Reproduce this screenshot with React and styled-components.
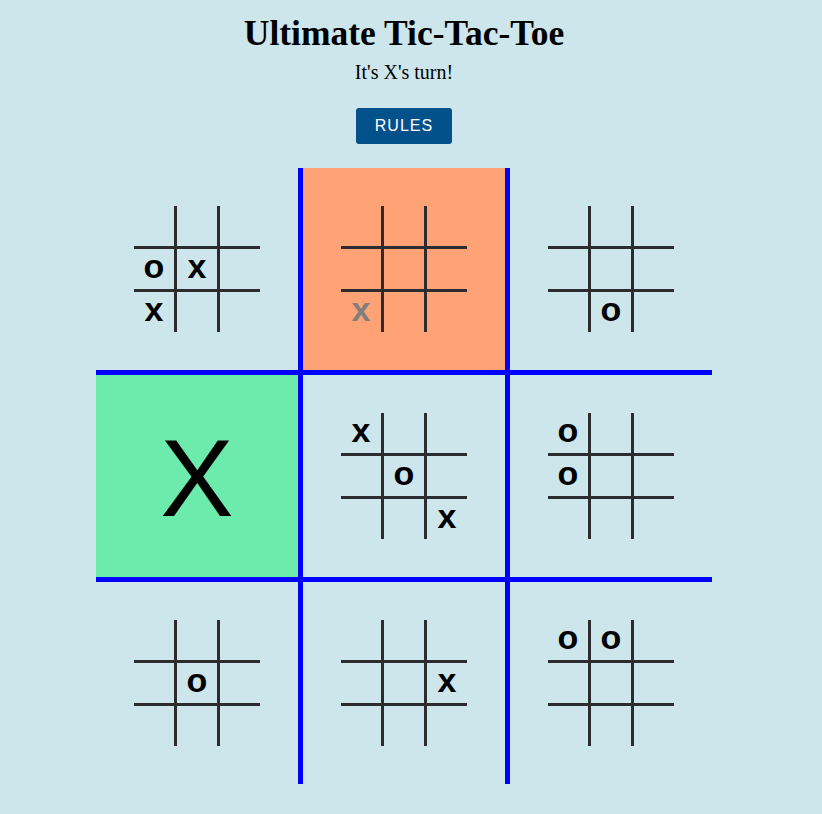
import React from "react";
import styled, { createGlobalStyle } from "styled-components";

const GlobalStyle = createGlobalStyle`
  body {
    margin: 0;
    background: #cde6eb;
    font-family: "Liberation Serif", "Times New Roman", serif;
  }
`;

const Page = styled.div`
  width: 808px;
  display: flex;
  flex-direction: column;
  align-items: center;
  padding-top: 13px;
`;

const Title = styled.h1`
  margin: 0;
  font-size: 35.5px;
  line-height: 40px;
  font-weight: bold;
  color: #000;
`;

const Status = styled.p`
  margin: 7px 0 0;
  font-size: 20px;
  line-height: 24px;
  color: #000;
`;

const RulesButton = styled.button`
  margin-top: 24px;
  width: 96px;
  height: 36px;
  border: none;
  border-radius: 3px;
  background: #03518a;
  color: #fff;
  font-family: "Liberation Sans", Arial, sans-serif;
  font-size: 16px;
  letter-spacing: 1px;
  cursor: pointer;
`;

const BigGrid = styled.div`
  margin-top: 24px;
  display: grid;
  grid-template-columns: repeat(3, auto);
`;

const line = "5px solid #0000ff";

const BigCell = styled.div`
  width: 202px;
  height: 202px;
  display: flex;
  align-items: center;
  justify-content: center;
  background: ${(p) => p.$bg || "transparent"};
  border-left: ${(p) => (p.$col === 1 ? line : "none")};
  border-right: ${(p) => (p.$col === 1 ? line : "none")};
  border-top: ${(p) => (p.$row === 1 ? line : "none")};
  border-bottom: ${(p) => (p.$row === 1 ? line : "none")};
`;

const WinMark = styled.span`
  font-family: "Liberation Sans", Arial, sans-serif;
  font-size: 110px;
  line-height: 1;
  color: #000;
  margin-top: 4px;
`;

const SmallBoard = styled.div`
  display: grid;
  grid-template-columns: repeat(3, auto);
`;

const SmallCell = styled.div`
  width: 40px;
  height: 34px;
  padding-bottom: 6px;
  display: flex;
  align-items: center;
  justify-content: center;
  border-right: ${(p) => (p.$col < 2 ? "3px solid #2c2b30" : "none")};
  border-bottom: ${(p) => (p.$row < 2 ? "3px solid #2c2b30" : "none")};
  font-family: "Liberation Sans", Arial, sans-serif;
  font-weight: bold;
  font-size: 34px;
  line-height: 1;
  color: ${(p) => (p.$ghost ? "#7f7f7f" : "#000")};
`;

const boards = [
  { cells: ["", "", "", "o", "x", "", "x", "", ""] },
  { cells: ["", "", "", "", "", "", "x", "", ""], ghost: 6, bg: "#ffa275" },
  { cells: ["", "", "", "", "", "", "", "o", ""] },
  { winner: "X", bg: "#6cebac" },
  { cells: ["x", "", "", "", "o", "", "", "", "x"] },
  { cells: ["o", "", "", "o", "", "", "", "", ""] },
  { cells: ["", "", "", "", "o", "", "", "", ""] },
  { cells: ["", "", "", "", "", "x", "", "", ""] },
  { cells: ["o", "o", "", "", "", "", "", "", ""] },
];

function Board({ board }) {
  if (board.winner) return <WinMark>{board.winner}</WinMark>;
  return (
    <SmallBoard>
      {board.cells.map((mark, i) => (
        <SmallCell
          key={i}
          $row={Math.floor(i / 3)}
          $col={i % 3}
          $ghost={board.ghost === i}
        >
          {mark}
        </SmallCell>
      ))}
    </SmallBoard>
  );
}

export default function App() {
  return (
    <>
      <GlobalStyle />
      <Page>
        <Title>Ultimate Tic-Tac-Toe</Title>
        <Status>It's X's turn!</Status>
        <RulesButton>RULES</RulesButton>
        <BigGrid>
          {boards.map((b, i) => (
            <BigCell key={i} $row={Math.floor(i / 3)} $col={i % 3} $bg={b.bg}>
              <Board board={b} />
            </BigCell>
          ))}
        </BigGrid>
      </Page>
    </>
  );
}
